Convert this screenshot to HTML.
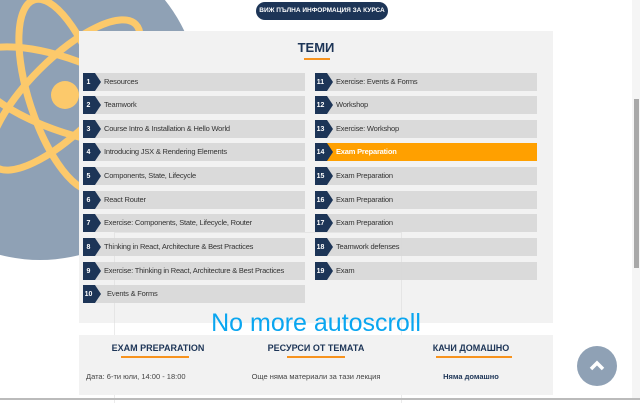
<!DOCTYPE html>
<html><head><meta charset="utf-8"><style>
body{margin:0;width:640px;height:400px;overflow:hidden;background:#fff;font-family:"Liberation Sans","Noto Sans CJK SC",sans-serif;position:relative}
.abs{position:absolute}
.panel{position:absolute;left:79px;top:31px;width:474px;height:292px;background:#f2f2f2}
.item{position:absolute;width:222px;height:18px;background:#dadada;font-size:7.5px;color:#333;line-height:18px}
.item .n{position:absolute;left:0;top:0;width:11px;height:18px;line-height:19px;background:#1d3557;color:#fff;font-weight:bold;font-size:7px;text-align:center;padding-right:1px}
.item .n:after{content:"";position:absolute;left:12px;top:0;border-left:6px solid #1d3557;border-top:9px solid transparent;border-bottom:9px solid transparent}
.item .t{position:absolute;left:21px;top:0;white-space:nowrap;letter-spacing:-0.2px}
.item.on{background:#ffa000}.item.on .t{color:#fff;font-weight:bold}
.h{position:absolute;font-size:9px;font-weight:bold;color:#1d3557;text-align:center;width:158px}
.u{position:absolute;height:2px;background:#f7931e}
</style></head><body>
<svg class="abs" style="left:0;top:0" width="260" height="270">
<ellipse cx="40" cy="100" rx="160" ry="160" fill="#8fa1b5"/>
<g fill="none" stroke="#fcc96b" stroke-width="7">
<ellipse cx="65" cy="95" rx="100" ry="36" transform="rotate(20 65 95)"/>
<ellipse cx="65" cy="95" rx="100" ry="36" transform="rotate(72 65 95)"/>
<ellipse cx="65" cy="95" rx="100" ry="36" transform="rotate(135 65 95)"/>
</g>
<circle cx="65" cy="95" r="14" fill="#fcc96b"/>
</svg>
<div class="abs" style="left:256px;top:2px;width:132px;height:18px;background:#1d3557;border-radius:9px;color:#fff;font-size:6.5px;font-weight:bold;text-align:center;line-height:18px">ВИЖ ПЪЛНА ИНФОРМАЦИЯ ЗА КУРСА</div>
<div class="panel"></div>
<div class="abs" style="left:0;width:632px;top:40px;text-align:center;font-size:13px;font-weight:bold;color:#1d3557">ТЕМИ</div>
<div class="u" style="left:304px;top:58px;width:26px"></div>

<div class="item" style="left:83px;top:73px"><span class="n">1</span><span class="t">Resources</span></div>
<div class="item" style="left:83px;top:96px"><span class="n">2</span><span class="t">Teamwork</span></div>
<div class="item" style="left:83px;top:120px"><span class="n">3</span><span class="t">Course Intro &amp; Installation &amp; Hello World</span></div>
<div class="item" style="left:83px;top:143px"><span class="n">4</span><span class="t">Introducing JSX &amp; Rendering Elements</span></div>
<div class="item" style="left:83px;top:167px"><span class="n">5</span><span class="t">Components, State, Lifecycle</span></div>
<div class="item" style="left:83px;top:191px"><span class="n">6</span><span class="t">React Router</span></div>
<div class="item" style="left:83px;top:214px"><span class="n">7</span><span class="t">Exercise: Components, State, Lifecycle, Router</span></div>
<div class="item" style="left:83px;top:238px"><span class="n">8</span><span class="t">Thinking in React, Architecture &amp; Best Practices</span></div>
<div class="item" style="left:83px;top:262px"><span class="n">9</span><span class="t">Exercise: Thinking in React, Architecture &amp; Best Practices</span></div>
<div class="item" style="left:83px;top:285px"><span class="n">10</span><span class="t" style="left:24px">Events &amp; Forms</span></div>

<div class="item" style="left:315px;top:73px"><span class="n">11</span><span class="t">Exercise: Events &amp; Forms</span></div>
<div class="item" style="left:315px;top:96px"><span class="n">12</span><span class="t">Workshop</span></div>
<div class="item" style="left:315px;top:120px"><span class="n">13</span><span class="t">Exercise: Workshop</span></div>
<div class="item on" style="left:315px;top:143px"><span class="n">14</span><span class="t">Exam Preparation</span></div>
<div class="item" style="left:315px;top:167px"><span class="n">15</span><span class="t">Exam Preparation</span></div>
<div class="item" style="left:315px;top:191px"><span class="n">16</span><span class="t">Exam Preparation</span></div>
<div class="item" style="left:315px;top:214px"><span class="n">17</span><span class="t">Exam Preparation</span></div>
<div class="item" style="left:315px;top:238px"><span class="n">18</span><span class="t">Teamwork defenses</span></div>
<div class="item" style="left:315px;top:262px"><span class="n">19</span><span class="t">Exam</span></div>

<div class="abs" style="left:114px;top:232px;width:286px;height:170px;border:1px solid rgba(215,215,215,.5);border-bottom:none"></div>

<div class="abs" style="left:79px;top:335px;width:474px;height:60px;background:#f2f2f2"></div>
<div class="h" style="left:79px;top:343px">EXAM PREPARATION</div>
<div class="u" style="left:121px;top:356px;width:68px"></div>
<div class="h" style="left:237px;top:343px">РЕСУРСИ ОТ ТЕМАТА</div>
<div class="u" style="left:287px;top:356px;width:58px"></div>
<div class="h" style="left:392px;top:343px">КАЧИ ДОМАШНО</div>
<div class="u" style="left:436px;top:356px;width:76px"></div>
<div class="abs" style="left:86px;top:372px;font-size:7.5px;color:#444">Дата: 6-ти юли, 14:00 - 18:00</div>
<div class="abs" style="left:237px;width:158px;text-align:center;top:372px;font-size:7.5px;color:#444">Още няма материали за тази лекция</div>
<div class="abs" style="left:392px;width:158px;text-align:center;top:372px;font-size:7.5px;color:#1d3557;font-weight:bold">Няма домашно</div>

<div class="abs" style="left:0;width:632px;top:309px;text-align:center;font-size:25px;color:#0aa6f0">No more autoscroll</div>

<div class="abs" style="left:577px;top:346px;width:40px;height:40px;border-radius:50%;background:#8fa1b5"></div>
<svg class="abs" style="left:577px;top:346px" width="40" height="40"><path d="M14 23 L20 17 L26 23" fill="none" stroke="#fff" stroke-width="3.5"/></svg>

<div class="abs" style="left:632px;top:0;width:8px;height:400px;background:#f5f5f5"></div>
<div class="abs" style="left:634px;top:99px;width:5px;height:169px;background:#a8a8a8"></div>
<div class="abs" style="left:0;top:398px;width:640px;height:2px;background:#bbb"></div>
</body></html>
